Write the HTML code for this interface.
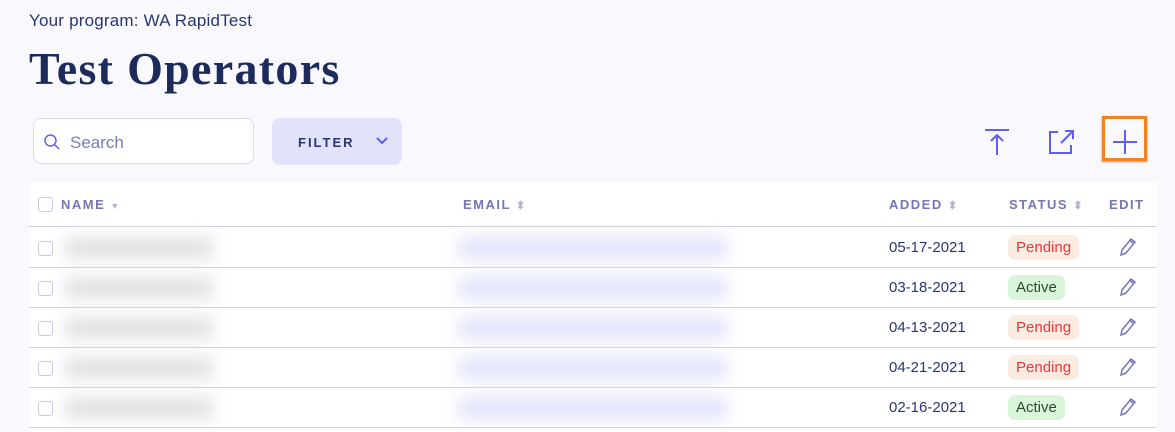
<!DOCTYPE html>
<html><head><style>
body{margin:0;width:1175px;height:432px;background:#f8f8fd;font-family:"Liberation Sans",sans-serif;overflow:hidden;position:relative}
.a{position:absolute}
.prog{left:29px;top:11px;font-size:17px;color:#2a3672;letter-spacing:0.2px}
h1{position:absolute;left:29px;top:42px;margin:0;font-family:"Liberation Serif",serif;font-size:46px;font-weight:bold;color:#1c2a5c;letter-spacing:1.3px}
.search{left:33px;top:118px;width:221px;height:46px;background:#fff;border:1px solid #dcdcf5;border-radius:8px;box-sizing:border-box}
.filter{left:272px;top:118px;width:130px;height:47px;background:#e2e3fb;border-radius:8px}
.table{left:29px;top:182px;width:1128px;height:250px;background:#fff}
.hd{font-size:13px;font-weight:bold;color:#7476b8;letter-spacing:1.5px;top:197px}
.line{left:29px;width:1128px;height:1px;background:#cfd0ee}
.cb{width:13px;height:13px;border:1.5px solid #c8c8e6;border-radius:3px;left:38px}
.blur{background:#e2e2e6;filter:blur(8px);height:22px;border-radius:6px}
.blurb{background:#e2e3fa;filter:blur(8px);height:22px;border-radius:6px}
.date{left:889px;font-size:15px;color:#2a3672}
.badge{font-size:15px;padding:4px 8px;border-radius:7px;left:1008px}
.pend{background:#fcebe1;color:#e53b3b}
.act{background:#daf6da;color:#2b4a2b}
.pen{left:1119px}
.s{color:#b4b5d6;font-size:11px}
</style></head><body>
<div class="a prog">Your program: WA RapidTest</div>
<h1>Test Operators</h1>
<div class="a search"></div>
<svg class="a" style="left:43px;top:133px" width="18" height="18" viewBox="0 0 18 18"><circle cx="7.5" cy="7.5" r="5.5" fill="none" stroke="#5c5ff0" stroke-width="1.4"/><path d="M11.5 11.5L16 16" stroke="#5c5ff0" stroke-width="1.4"/></svg>
<div class="a" style="left:70px;top:133px;font-size:17px;color:#7a7cb8">Search</div>
<div class="a filter"></div>
<div class="a" style="left:298px;top:135px;font-size:13px;font-weight:bold;letter-spacing:2px;color:#2a3672">FILTER</div>
<svg class="a" style="left:376px;top:137px" width="12" height="8"><path d="M1 1L6 6L11 1" fill="none" stroke="#5c5ff0" stroke-width="2"/></svg>
<svg class="a" style="left:984px;top:128px" width="26" height="28"><path d="M1 2H25M13 7V27M7 13L13 7L19 13" fill="none" stroke="#5c5ff0" stroke-width="2"/></svg>
<svg class="a" style="left:1048px;top:128px" width="28" height="28"><path d="M10 4H2V25H23V17M13 15L25 3M17 3H25V11" fill="none" stroke="#5c5ff0" stroke-width="2"/></svg>
<div class="a" style="left:1102px;top:116px;width:45px;height:45px;border:3px solid #f4821f;box-sizing:border-box;box-shadow:0 1px 2px rgba(0,0,0,.4)"></div>
<svg class="a" style="left:1111px;top:128px" width="28" height="28"><path d="M14 2V26M2 14H26" stroke="#5c5ff0" stroke-width="2"/></svg>
<div class="a table"></div>
<div class="a cb" style="top:197px"></div>
<div class="a hd" style="left:61px">NAME <span class="s" style="font-size:9px">▼</span></div>
<div class="a hd" style="left:463px">EMAIL <span class="s">⬍</span></div>
<div class="a hd" style="left:889px">ADDED <span class="s">⬍</span></div>
<div class="a hd" style="left:1009px">STATUS <span class="s">⬍</span></div>
<div class="a hd" style="left:1109px">EDIT</div>
<div class="a line" style="top:226px"></div>
<div class="a line" style="top:267px"></div>
<div class="a line" style="top:307px"></div>
<div class="a line" style="top:347px"></div>
<div class="a line" style="top:387px"></div>
<div class="a line" style="top:427px"></div>

<div class="a cb" style="top:241px"></div><div class="a blur" style="left:64px;top:237px;width:150px"></div><div class="a blurb" style="left:458px;top:237px;width:270px"></div><div class="a date" style="top:239px">05-17-2021</div><div class="a badge pend" style="top:235px">Pending</div>
<div class="a cb" style="top:281px"></div><div class="a blur" style="left:64px;top:277px;width:150px"></div><div class="a blurb" style="left:458px;top:277px;width:270px"></div><div class="a date" style="top:279px">03-18-2021</div><div class="a badge act" style="top:275px">Active</div>
<div class="a cb" style="top:321px"></div><div class="a blur" style="left:64px;top:317px;width:150px"></div><div class="a blurb" style="left:458px;top:317px;width:270px"></div><div class="a date" style="top:319px">04-13-2021</div><div class="a badge pend" style="top:315px">Pending</div>
<div class="a cb" style="top:361px"></div><div class="a blur" style="left:64px;top:357px;width:150px"></div><div class="a blurb" style="left:458px;top:357px;width:270px"></div><div class="a date" style="top:359px">04-21-2021</div><div class="a badge pend" style="top:355px">Pending</div>
<div class="a cb" style="top:401px"></div><div class="a blur" style="left:64px;top:397px;width:150px"></div><div class="a blurb" style="left:458px;top:397px;width:270px"></div><div class="a date" style="top:399px">02-16-2021</div><div class="a badge act" style="top:395px">Active</div>

<svg class="a pen" style="top:237px" width="18" height="20"><path d="M2 18L3 13L12 2L16 5L7 16Z M11 3.5L14.5 6.5" fill="none" stroke="#7476b8" stroke-width="1.5"/></svg>
<svg class="a pen" style="top:277px" width="18" height="20"><path d="M2 18L3 13L12 2L16 5L7 16Z M11 3.5L14.5 6.5" fill="none" stroke="#7476b8" stroke-width="1.5"/></svg>
<svg class="a pen" style="top:317px" width="18" height="20"><path d="M2 18L3 13L12 2L16 5L7 16Z M11 3.5L14.5 6.5" fill="none" stroke="#7476b8" stroke-width="1.5"/></svg>
<svg class="a pen" style="top:357px" width="18" height="20"><path d="M2 18L3 13L12 2L16 5L7 16Z M11 3.5L14.5 6.5" fill="none" stroke="#7476b8" stroke-width="1.5"/></svg>
<svg class="a pen" style="top:397px" width="18" height="20"><path d="M2 18L3 13L12 2L16 5L7 16Z M11 3.5L14.5 6.5" fill="none" stroke="#7476b8" stroke-width="1.5"/></svg>
</body></html>
